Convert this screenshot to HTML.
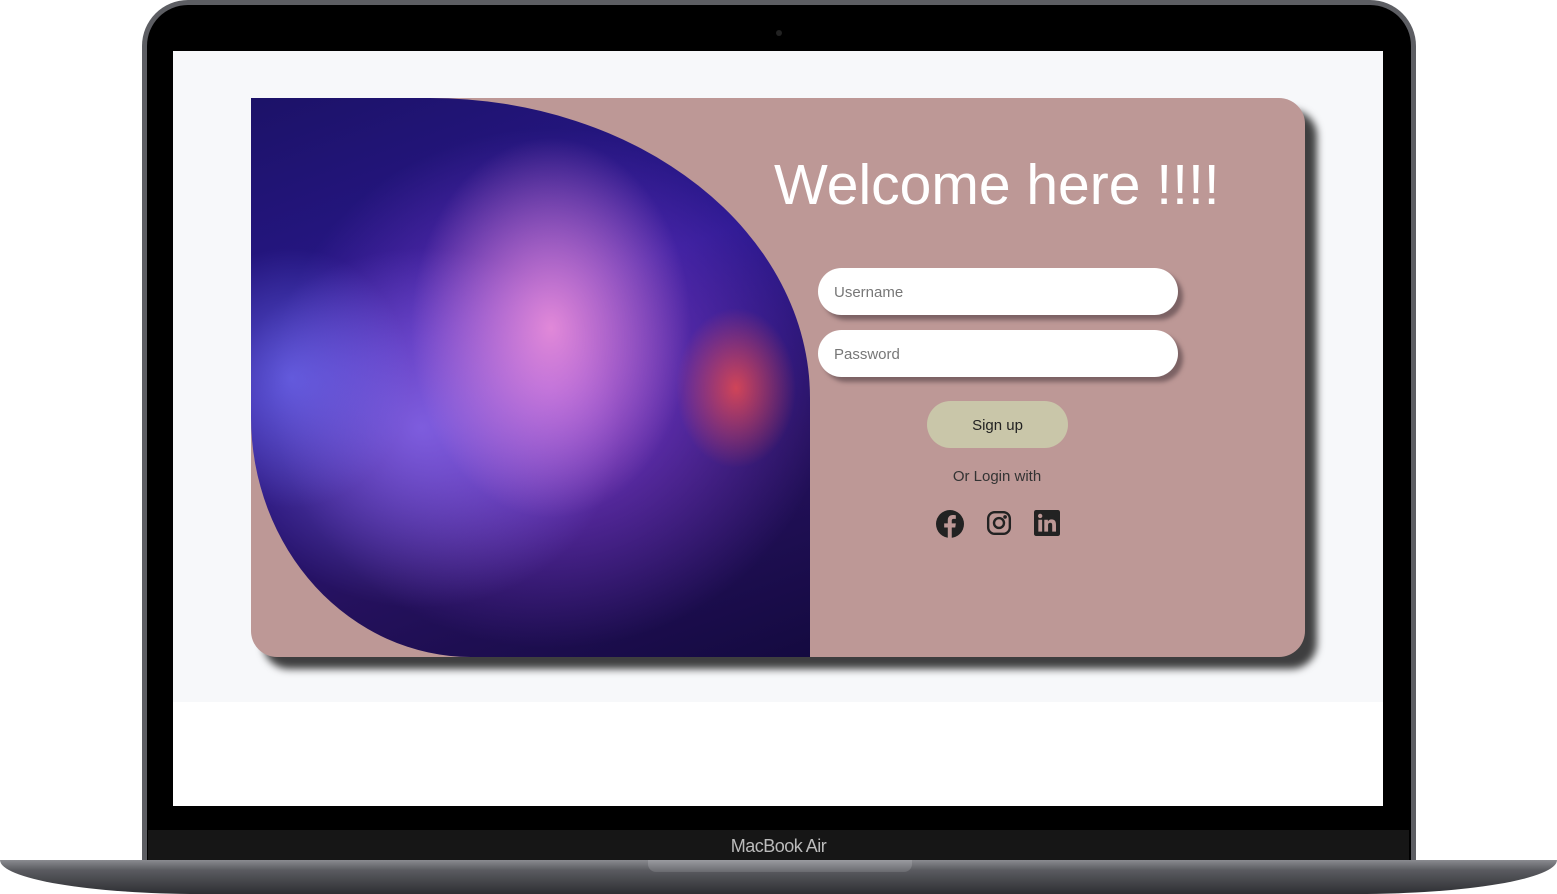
<!DOCTYPE html>
<html><head><style>
*{margin:0;padding:0;box-sizing:border-box}
body{width:1557px;height:894px;background:#fff;position:relative;overflow:hidden;font-family:"Liberation Sans",sans-serif}
.lid{position:absolute;left:142px;top:0;width:1274px;height:866px;background:#000;border:5px solid #5d5e63;border-bottom:none;border-radius:46px 46px 0 0}
.cam{position:absolute;left:776px;top:30px;width:6px;height:6px;border-radius:50%;background:#222}
.screen{position:absolute;left:173px;top:51px;width:1210px;height:755px;background:#fff}
.page{position:absolute;left:0;top:0;width:1210px;height:651px;background:#f7f8fa}
.card{position:absolute;left:78px;top:47px;width:1054px;height:559px;background:#bd9896;border-radius:0 26px 26px 26px;box-shadow:12px 12px 8px rgba(0,0,0,.75);overflow:hidden}
.img{position:absolute;left:0;top:0;width:559px;height:559px;border-radius:0 380px 0 220px/0 300px 0 240px;
background:
radial-gradient(ellipse 60px 80px at 485px 290px,rgba(255,80,70,.75),transparent),
radial-gradient(ellipse 140px 190px at 300px 230px,rgba(245,150,220,.85),transparent),
radial-gradient(ellipse 120px 130px at 40px 280px,rgba(120,120,255,.6),transparent),
radial-gradient(ellipse 200px 180px at 170px 330px,rgba(140,110,240,.75),transparent),
radial-gradient(ellipse 280px 260px at 300px 290px,#7d3cd0,transparent),
linear-gradient(160deg,#1c1268,#2a1890 40%,#25115e 70%,#140a40)}
h1{position:absolute;left:523px;top:54px;font-weight:normal;font-size:57px;color:#fff;letter-spacing:0;white-space:nowrap}
.in{position:absolute;left:567px;width:360px;height:47px;background:#fff;border-radius:24px;box-shadow:5px 5px 4px #7c6264;font-size:15px;color:#777;padding:16px 0 0 16px}
.btn{position:absolute;left:676px;top:303px;width:141px;height:47px;background:#c9c6a9;border-radius:24px;text-align:center;line-height:50px;font-size:15px;color:#222}
.or{position:absolute;left:600px;top:370px;width:292px;text-align:center;font-size:15px;color:#333}
.ic{position:absolute;top:412px}
.bar{position:absolute;left:148px;top:830px;width:1261px;height:32px;background:#161616;color:#bbb;text-align:center;font-size:18px;line-height:32px;letter-spacing:-.5px}
.base{position:absolute;left:0;top:860px;width:1557px;height:34px;background:linear-gradient(#8a8b90,#5a5b60 30%,#2e2f33);border-radius:0 0 200px 200px/0 0 34px 34px}
.notch{position:absolute;left:648px;top:860px;width:264px;height:12px;background:linear-gradient(#9a9ba0,#6a6b70);border-radius:0 0 8px 8px}
</style></head><body>
<div class="lid"></div><div class="cam"></div>
<div class="screen"><div class="page">
<div class="card"><div class="img"></div>
<h1>Welcome here !!!!</h1>
<div class="in" style="top:170px">Username</div>
<div class="in" style="top:232px">Password</div>
<div class="btn">Sign up</div>
<div class="or">Or Login with</div>
<svg class="ic" style="left:685px" width="28" height="28" viewBox="0 0 24 24"><circle cx="12" cy="12" r="12" fill="#222"/><path d="M13.5 24V15h3l.5-3.5h-3.5V9.3c0-1 .3-1.7 1.8-1.7H17V4.5c-.3 0-1.4-.2-2.6-.2-2.6 0-4.3 1.6-4.3 4.4v2.8H7V15h3.1v9z" fill="#bd9896"/></svg>
<svg class="ic" style="left:735px" width="26" height="26" viewBox="0 0 24 24" fill="none" stroke="#222" stroke-width="2.2"><rect x="2" y="2" width="20" height="20" rx="6"/><circle cx="12" cy="12" r="4.6"/><circle cx="17.6" cy="6.4" r=".6" fill="#222"/></svg>
<svg class="ic" style="left:783px" width="26" height="26" viewBox="0 0 24 24"><rect width="24" height="24" rx="2" fill="#222"/><path d="M4 9h3.5v11H4zM5.7 3.5a2 2 0 110 4 2 2 0 010-4zM9.5 9h3.3v1.6c.5-.9 1.6-1.9 3.4-1.9 3.5 0 4.1 2.3 4.1 5.3V20h-3.5v-5.3c0-1.3 0-2.9-1.8-2.9s-2 1.4-2 2.8V20H9.5z" fill="#bd9896"/></svg>
</div></div></div>
<div class="bar">MacBook Air</div>
<div class="base"></div><div class="notch"></div>
</body></html>
